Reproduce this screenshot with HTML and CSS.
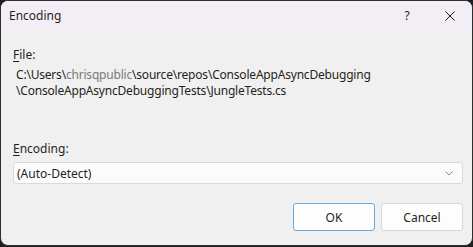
FILE: index.html
```html
<!DOCTYPE html>
<html>
<head>
<meta charset="utf-8">
<link rel="stylesheet" href="styles.css">
</head>
<body>
<div class="window">
  <div class="titlebar">
    <span class="title">Encoding</span>
    <span class="help">?</span>
    <span class="close">
      <svg width="10" height="10" viewBox="0 0 10 10"><path d="M0.5 0.5L9.5 9.5M9.5 0.5L0.5 9.5" stroke="#1a1a1a" stroke-width="1" fill="none"/></svg>
    </span>
  </div>
  <div class="content">
    <div class="label"><u>F</u>ile:</div>
    <div class="path">
      <div>C:\Users\<span class="muted">chrisqpublic</span>\source\repos\ConsoleAppAsyncDebugging</div>
      <div>\ConsoleAppAsyncDebuggingTests\JungleTests.cs</div>
    </div>
    <div class="label enc-label"><u>E</u>ncoding:</div>
    <div class="select">
      <span>(Auto-Detect)</span>
      <svg class="chev" width="8" height="5" viewBox="0 0 8 5"><path d="M0.5 0.5L4 4L7.5 0.5" stroke="#8a8a8a" stroke-width="1" fill="none"/></svg>
    </div>
    <div class="buttons">
      <button class="btn primary">OK</button>
      <button class="btn">Cancel</button>
    </div>
  </div>
</div>
</body>
</html>
```
FILE: styles.css
```css
html, body {
  margin: 0;
  padding: 0;
}
body {
  background: #1e1e1e;
  width: 473px;
  height: 247px;
  font-family: "Noto Sans", "Open Sans", sans-serif;
  font-size: 12px;
  color: #1f1f1f;
}
.window {
  box-sizing: border-box;
  width: 473px;
  height: 246px;
  border: 1px solid #2e2e2e;
  border-radius: 8px;
  background: #f0f0f0;
  overflow: hidden;
  display: flex;
  flex-direction: column;
}
.titlebar {
  height: 29px;
  background: #f3eef6;
  display: flex;
  align-items: center;
  padding-left: 8px;
}
.title {
  flex: 1;
  line-height: 16px;
  margin-top: 1px;
}
.help {
  width: 10px;
  text-align: center;
  font-size: 12px;
  margin-right: 33px;
}
.close {
  width: 10px;
  height: 10px;
  margin-right: 17px;
  display: flex;
}
.content {
  padding: 17px 9px 0 12px;
  display: flex;
  flex-direction: column;
}
.label {
  line-height: 16px;
}
.label u {
  text-underline-offset: 2px;
}
.path {
  margin-top: 4px;
  margin-left: 3px;
  line-height: 16px;
  letter-spacing: -0.2px;
}
.muted {
  color: #7a7a7a;
}
.enc-label {
  margin-top: 42px;
}
.select {
  margin-top: 5px;
  height: 22px;
  box-sizing: border-box;
  border: 1px solid #dadada;
  border-radius: 3px;
  background: #fbfbfb;
  display: flex;
  align-items: center;
  justify-content: space-between;
  padding: 0 9px 0 3px;
}
.chev {
  display: block;
}
.buttons {
  margin-top: 19px;
  display: flex;
  justify-content: flex-end;
  gap: 6px;
}
.btn {
  font-family: inherit;
  font-size: 12px;
  color: #1f1f1f;
  width: 82px;
  height: 28px;
  box-sizing: border-box;
  border: 1px solid #d8d8d8;
  border-radius: 3px;
  background: #fdfdfd;
  padding: 0;
}
.btn.primary {
  border-color: #6aa9dc;
}
```
